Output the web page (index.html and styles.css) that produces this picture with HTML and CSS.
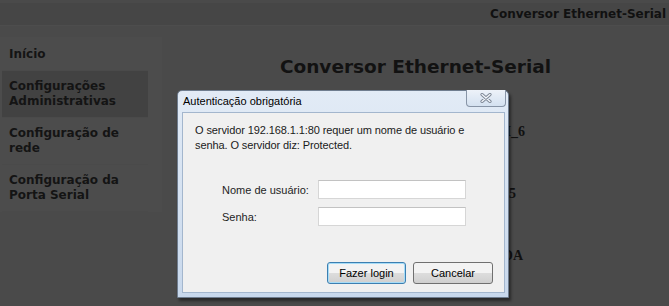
FILE: index.html
```html
<!DOCTYPE html>
<html lang="pt-BR">
<head>
    <meta charset="UTF-8">
    <meta name="viewport" content="width=device-width, initial-scale=1.0">
    <title>Conversor Ethernet-Serial</title>
    <link rel="stylesheet" href="styles.css">
</head>
<body>

<div class="topbar">Conversor Ethernet-Serial</div>

<div class="layout">
    <nav class="sidebar">
        <a class="nav-item">Início</a>
        <a class="nav-item active">Configurações Administrativas</a>
        <a class="nav-item">Configuração de rede</a>
        <a class="nav-item">Configuração da Porta Serial</a>
    </nav>

    <main class="content">
        <h1>Conversor Ethernet-Serial</h1>
        <div class="info">
            <div class="info-row">ETH_6</div>
            <div class="info-row shift-9">5005</div>
            <div class="info-row shift-2">0xDA</div>
        </div>
    </main>
</div>

<!-- janela de autenticacao do navegador -->
<div class="dialog">
    <div class="dialog-title">Autenticação obrigatória</div>
    <div class="close-btn">
        <svg width="12" height="10" viewBox="0 0 12 10">
            <path d="M2 1.5 L10 8.5 M10 1.5 L2 8.5" stroke="#7d8796" stroke-width="3.2" stroke-linecap="round"/>
            <path d="M2 1.5 L10 8.5 M10 1.5 L2 8.5" stroke="#f4f7fb" stroke-width="1.3" stroke-linecap="round"/>
        </svg>
    </div>
    <div class="dialog-body">
        <p class="message">O servidor 192.168.1.1:80 requer um nome de usuário e senha. O servidor diz: Protected.</p>
        <div class="login-form">
            <label>Nome de usuário:</label>
            <input type="text">
            <label>Senha:</label>
            <input type="password">
        </div>
        <div class="buttons">
            <button class="btn btn-default">Fazer login</button>
            <button class="btn">Cancelar</button>
        </div>
    </div>
</div>

</body>
</html>
```

FILE: styles.css
```css
body {
    margin: 0;
    height: 306px;
    overflow: hidden;
    background: #4a4a4a;
    font-family: 'DejaVu Sans', Verdana, sans-serif;
    color: #111;
    position: relative;
}

.topbar {
    margin-top: 3px;
    height: 22px;
    line-height: 22px;
    background: #464646;
    border-bottom: 1px solid #4d4d4d;
    text-align: right;
    padding-right: 3px;
    font-size: 12px;
    font-weight: bold;
}

.layout {
    display: flex;
    margin-top: 11px;
}

.sidebar {
    width: 162px;
    padding-top: 2px;
    background: #4c4c4c;
    display: flex;
    flex-direction: column;
    align-self: flex-start;
}

.nav-item {
    width: 146px;
    margin-left: 2px;
    box-sizing: border-box;
    padding: 8px 7px;
    font-size: 12px;
    line-height: 15px;
    font-weight: bold;
    color: #141414;
    border-bottom: 1px solid #4a4a4a;
}

.nav-item.active {
    background: #424242;
}

.content {
    flex: 1;
}

.content h1 {
    margin: 19px 0 0;
    text-align: center;
    font-size: 18.5px;
    line-height: 22px;
    color: #121212;
}

.info {
    width: 363px;
    margin-top: 45px;
    display: flex;
    flex-direction: column;
    gap: 44px;
    font-family: 'Liberation Serif', serif;
    font-size: 14px;
    line-height: 18px;
    font-weight: bold;
    text-align: right;
}

.shift-9 { padding-right: 9px; }
.shift-2 { padding-right: 2px; }

/* dialog */
.dialog {
    position: absolute;
    left: 177px;
    top: 90px;
    width: 332px;
    height: 208px;
    box-sizing: border-box;
    border: 1px solid #6f7d8f;
    border-radius: 5px 5px 0 0;
    background: linear-gradient(#e2ebf6, #c8d8ec);
    padding: 0 3px 4px 4px;
    box-shadow: 2px 3px 3px rgba(0, 0, 0, 0.45);
    display: flex;
    flex-direction: column;
    font-family: 'Liberation Sans', Arial, sans-serif;
    font-size: 11px;
    color: #000;
}

.dialog-title {
    height: 21px;
    line-height: 21px;
    padding-left: 1px;
}

.close-btn {
    position: absolute;
    top: -1px;
    right: 2px;
    width: 40px;
    height: 17px;
    box-sizing: border-box;
    border: 1px solid #8794a6;
    border-top: none;
    border-radius: 0 0 4px 4px;
    background: linear-gradient(#edf2f9, #d4e1f0);
    display: flex;
    align-items: center;
    justify-content: center;
}

.dialog-body {
    flex: 1;
    background: #f0f0f0;
    border: 1px solid #a3b6cd;
    padding: 10px 11px 8px 12px;
    display: flex;
    flex-direction: column;
}

.message {
    margin: 0;
    line-height: 15px;
    letter-spacing: -0.1px;
    color: #1a1a1a;
}

.login-form {
    margin: 27px 0 0 27px;
    display: grid;
    grid-template-columns: 96px 148px;
    row-gap: 8px;
    align-items: center;
}

.login-form label {
    color: #1e1e1e;
}

.login-form input {
    height: 19px;
    box-sizing: border-box;
    border: 1px solid #d6d6d6;
    border-top-color: #c2c2c2;
    background: #fff;
    margin: 0;
}

.buttons {
    margin-top: auto;
    display: flex;
    justify-content: flex-end;
    gap: 7px;
}

.btn {
    width: 80px;
    height: 22px;
    border: 1px solid #707070;
    border-radius: 3px;
    background: linear-gradient(#f3f3f3 50%, #dddddd 50%, #cfcfcf);
    font-family: 'Liberation Sans', Arial, sans-serif;
    font-size: 11px;
    color: #000;
    padding: 0;
}

.btn-default {
    width: 79px;
    border-color: #3c7fb1;
    box-shadow: inset 0 0 0 1px #a6dcf7;
}
```
